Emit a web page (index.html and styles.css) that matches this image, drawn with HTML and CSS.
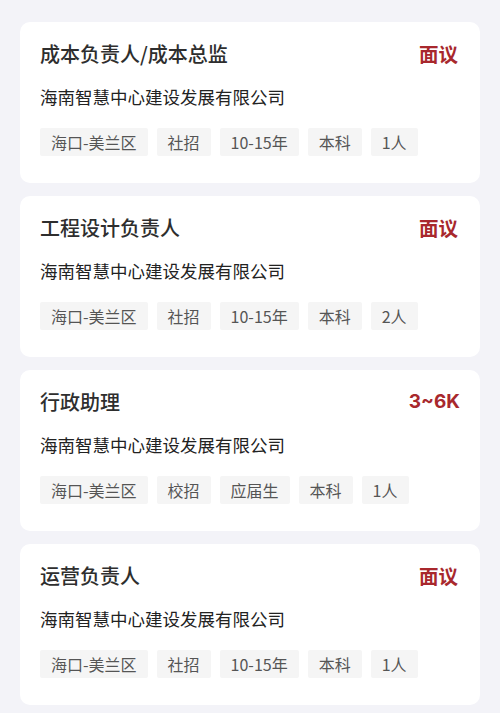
FILE: index.html
```html
<!DOCTYPE html>
<html lang="zh-CN">
<head>
<meta charset="utf-8">
<link rel="stylesheet" href="styles.css">
</head>
<body>
<div class="list">
  <div class="card">
    <div class="head"><span class="title">成本负责人/成本总监</span><span class="pay">面议</span></div>
    <div class="company">海南智慧中心建设发展有限公司</div>
    <div class="tags"><span class="tag">海口-美兰区</span><span class="tag">社招</span><span class="tag">10-15年</span><span class="tag">本科</span><span class="tag">1人</span></div>
  </div>
  <div class="card">
    <div class="head"><span class="title">工程设计负责人</span><span class="pay">面议</span></div>
    <div class="company">海南智慧中心建设发展有限公司</div>
    <div class="tags"><span class="tag">海口-美兰区</span><span class="tag">社招</span><span class="tag">10-15年</span><span class="tag">本科</span><span class="tag">2人</span></div>
  </div>
  <div class="card">
    <div class="head"><span class="title">行政助理</span><span class="pay num">3~6K</span></div>
    <div class="company">海南智慧中心建设发展有限公司</div>
    <div class="tags"><span class="tag">海口-美兰区</span><span class="tag">校招</span><span class="tag">应届生</span><span class="tag">本科</span><span class="tag">1人</span></div>
  </div>
  <div class="card">
    <div class="head"><span class="title">运营负责人</span><span class="pay">面议</span></div>
    <div class="company">海南智慧中心建设发展有限公司</div>
    <div class="tags"><span class="tag">海口-美兰区</span><span class="tag">社招</span><span class="tag">10-15年</span><span class="tag">本科</span><span class="tag">1人</span></div>
  </div>
</div>
</body>
</html>
```
FILE: styles.css
```css
html, body {
  margin: 0;
  padding: 0;
  background: #f3f3f8;
  font-family: "Noto Sans CJK SC", "Noto Sans", sans-serif;
}
.list {
  display: flex;
  flex-direction: column;
  gap: 13px;
  padding: 22px 20px 0 20px;
}
.card {
  background: #ffffff;
  border-radius: 10px;
  padding: 18px 20px 27px 20px;
  display: flex;
  flex-direction: column;
}
.head {
  display: flex;
  justify-content: space-between;
  align-items: center;
  height: 28px;
}
.title {
  font-size: 20px;
  font-weight: 500;
  color: #2e2e2e;
  line-height: 28px;
}
.pay {
  font-size: 19.5px;
  font-weight: 700;
  color: #a8282d;
  line-height: 28px;
  margin-right: 2px;
}
.pay.num {
  font-family: "Inter", "Roboto", sans-serif;
  font-size: 19px;
  font-weight: 700;
  margin-right: 0;
}
.company {
  margin-top: 17px;
  font-size: 17.5px;
  line-height: 24px;
  color: #222222;
}
.tags {
  margin-top: 19px;
  display: flex;
  gap: 9px;
}
.tag {
  background: #f5f5f5;
  color: #555555;
  font-size: 16px;
  height: 28px;
  line-height: 28px;
  padding: 0 11px;
  border-radius: 2px;
}
```
